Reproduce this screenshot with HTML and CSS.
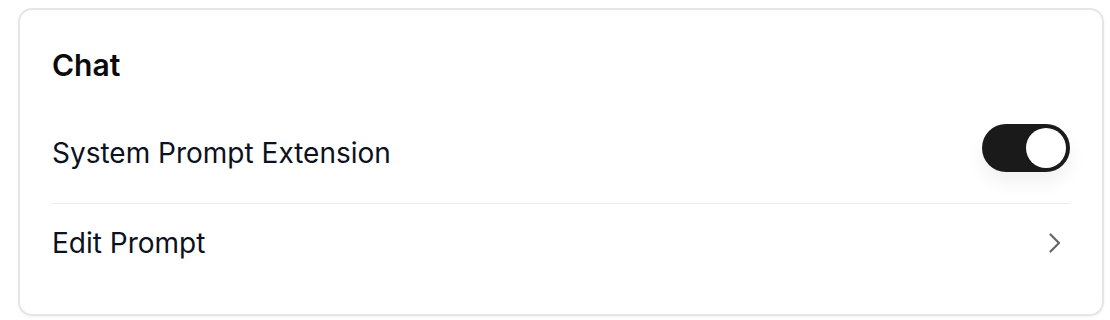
FILE: index.html
```html
<!DOCTYPE html>
<html>
<head>
<meta charset="utf-8">
<link rel="stylesheet" href="styles.css">
</head>
<body>
<div class="page">
  <section class="card">
    <h2 class="title">Chat</h2>
    <div class="row row-toggle">
      <span class="label">System Prompt Extension</span>
      <span class="toggle"><span class="knob"></span></span>
    </div>
    <div class="row row-link">
      <span class="label">Edit Prompt</span>
      <svg class="chev" width="14" height="22" viewBox="0 0 14 22" fill="none"><path d="M2.5 2.5L11 11L2.5 19.5" stroke="#666666" stroke-width="2.2" stroke-linecap="round" stroke-linejoin="round"/></svg>
    </div>
  </section>
</div>
</body>
</html>
```
FILE: styles.css
```css
html, body { margin: 0; padding: 0; background: #fff; }
body { font-family: Inter, "Noto Sans", sans-serif; color: #0d1120; }
.page { padding: 8px 6px 4px 18px; }
.card {
  box-sizing: border-box;
  height: 308px;
  border: 2px solid #e6e6e6;
  border-radius: 14px;
  padding: 37px 32px 0 32px;
  box-shadow: 0 1px 3px rgba(0,0,0,0.05);
}
.title {
  margin: 0 0 20px 0;
  font-size: 30px;
  line-height: 36px;
  font-weight: 600;
  color: #0a0a0a;
}
.row {
  display: flex;
  align-items: center;
  justify-content: space-between;
}
.row-toggle { height: 100px; border-bottom: 1px solid #ececec; }
.row-link { height: 78px; }
.label { font-size: 28px; line-height: 32px; }
.toggle {
  width: 88px; height: 48px;
  margin-bottom: 10px;
  border-radius: 24px;
  background: #1a1a1a;
  display: flex; align-items: center; justify-content: flex-end;
  padding: 4px;
  box-sizing: border-box;
  box-shadow: 0 10px 18px rgba(0,0,0,0.06);
}
.knob { width: 40px; height: 40px; border-radius: 50%; background: #fff; }
.chev { margin-right: 8px; }
```
